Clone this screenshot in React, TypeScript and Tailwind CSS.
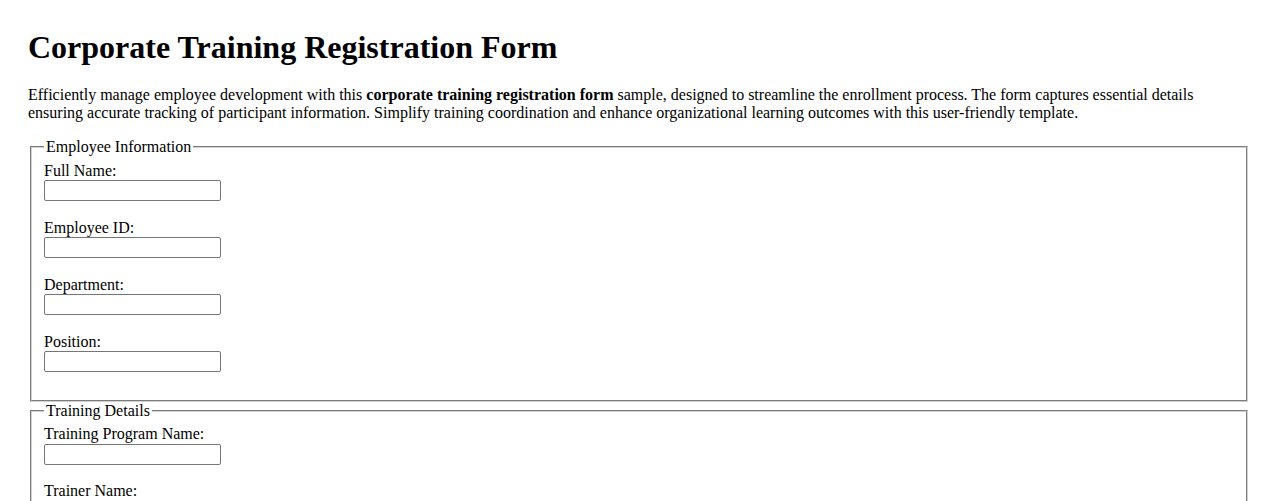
const sections = [
  {
    legend: 'Employee Information',
    fields: ['Full Name:', 'Employee ID:', 'Department:', 'Position:'],
  },
  {
    legend: 'Training Details',
    fields: ['Training Program Name:', 'Trainer Name:', 'Training Date:', 'Training Location:'],
  },
  {
    legend: 'Contact Information',
    fields: ['Email Address:', 'Phone Number:'],
  },
]

function Field({ label }: { label: string }) {
  const id = label.replace(/[^a-z]/gi, '').toLowerCase()
  return (
    <div className="mb-[17.6px]">
      <label htmlFor={id} className="block">{label}</label>
      <input
        id={id}
        type="text"
        className="block w-[177px] h-[21px] border border-[#767676] rounded-[2px] px-[2px] text-[13.33px] font-['Liberation_Sans',sans-serif] bg-white"
      />
    </div>
  )
}

export default function App() {
  return (
    <div className="min-h-screen bg-white text-black px-[28px] pt-[29px] pb-8 font-['Liberation_Serif',serif] text-[16px] leading-[1.15]">
      <h1 className="text-[32px] font-bold leading-[1.15]">Corporate Training Registration Form</h1>

      <p className="mt-[20px] mb-[15px]">
        Efficiently manage employee development with this <strong>corporate training registration form</strong> sample,
        designed to streamline the enrollment process. The form captures essential details ensuring accurate tracking of
        participant information. Simplify training coordination and enhance organizational learning outcomes with this
        user-friendly template.
      </p>

      <form onSubmit={e => e.preventDefault()}>
        {sections.map(s => (
          <fieldset
            key={s.legend}
            className="mx-[2px] px-[12px] pt-[5.6px] pb-[10px] border-2 [border-style:groove] border-[#d0d0d0]"
          >
            <legend className="px-[2px]">{s.legend}</legend>
            {s.fields.map(f => <Field key={f} label={f} />)}
          </fieldset>
        ))}
        <input
          type="submit"
          value="Register"
          className="mt-4 mx-[2px] px-[6px] py-[1px] border border-[#767676] rounded-[2px] bg-[#efefef] text-[13.33px] font-['Liberation_Sans',sans-serif]"
        />
      </form>
    </div>
  )
}
